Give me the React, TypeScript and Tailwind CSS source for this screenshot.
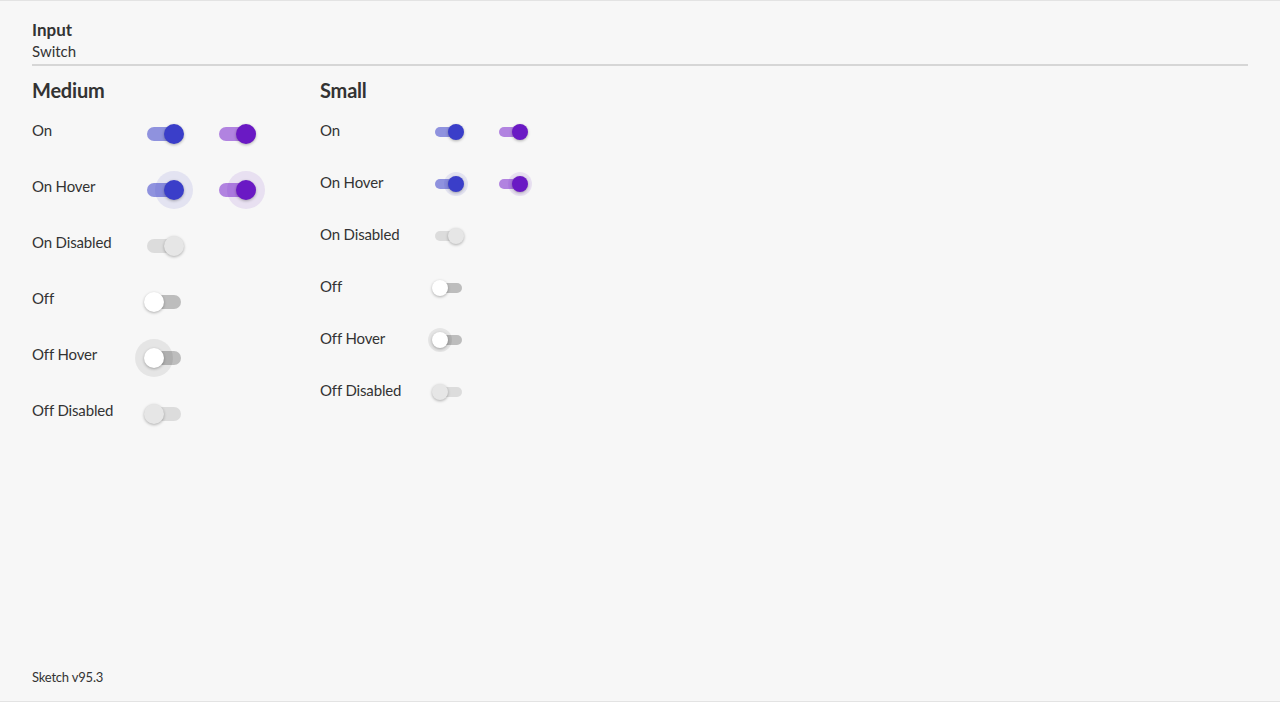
import React from "react";

type Variant = "on" | "onHover" | "onDisabled" | "off" | "offHover" | "offDisabled";

function Switch({ size, color, variant }: { size: "md" | "sm"; color: "blue" | "purple"; variant: Variant }) {
  const md = size === "md";
  const on = variant.startsWith("on");
  const hover = variant.endsWith("Hover");
  const disabled = variant.endsWith("Disabled");

  let track = "bg-[#bdbdbd]";
  let thumb = "bg-white";
  let halo = "bg-[rgba(0,0,0,0.07)]";
  if (on && !disabled) {
    if (color === "blue") {
      track = "bg-[#8f92de]";
      thumb = "bg-[#3a3ec9]";
      halo = "bg-[rgba(58,62,201,0.1)]";
    } else {
      track = "bg-[#b183e0]";
      thumb = "bg-[#6a19c4]";
      halo = "bg-[rgba(106,25,196,0.1)]";
    }
  }
  if (disabled) {
    track = "bg-[#dcdcdc]";
    thumb = "bg-[#e6e6e6]";
  }

  const box = md ? "w-[37px] h-[20px]" : "w-[29px] h-[16px]";
  const trackCls = md ? "left-0 top-[3px] w-[34px] h-[14px]" : "left-0 top-[3px] w-[27px] h-[10px]";
  const thumbPos = md ? (on ? "left-[17px]" : "left-[-3px]") : on ? "left-[13px]" : "left-[-3px]";
  const thumbSize = md ? "w-[20px] h-[20px] top-0" : "w-[16px] h-[16px] top-0";
  const haloPos = md
    ? on
      ? "left-[8px] top-[-9px] w-[38px] h-[38px]"
      : "left-[-12px] top-[-9px] w-[38px] h-[38px]"
    : on
    ? "left-[9px] top-[-4px] w-[24px] h-[24px]"
    : "left-[-7px] top-[-4px] w-[24px] h-[24px]";

  return (
    <div className={`relative ${box}`}>
      <div className={`absolute rounded-full ${trackCls} ${track}`} />
      {hover && <div className={`absolute rounded-full ${haloPos} ${halo}`} />}
      <div
        className={`absolute rounded-full ${thumbSize} ${thumbPos} ${thumb} shadow-[0_1px_3px_rgba(0,0,0,0.3)]`}
      />
    </div>
  );
}

const rows: { label: string; variant: Variant; both: boolean }[] = [
  { label: "On", variant: "on", both: true },
  { label: "On Hover", variant: "onHover", both: true },
  { label: "On Disabled", variant: "onDisabled", both: false },
  { label: "Off", variant: "off", both: false },
  { label: "Off Hover", variant: "offHover", both: false },
  { label: "Off Disabled", variant: "offDisabled", both: false },
];

function Column({ title, size }: { title: string; size: "md" | "sm" }) {
  const md = size === "md";
  return (
    <div className="flex flex-col">
      <div className="text-[20px] font-bold leading-[24px] text-[#333] tracking-[-0.2px]">{title}</div>
      <div className={`flex flex-col ${md ? "mt-[2px]" : "mt-[4px]"}`}>
        {rows.map((r) => (
          <div key={r.label} className={`flex items-center ${md ? "h-[56px]" : "h-[52px]"}`}>
            <div className="w-[115px] text-[15px] text-[#333] tracking-[-0.15px] mt-[-4px]">{r.label}</div>
            <div className={`flex items-center gap-[35px] ${md ? "mt-[4px]" : ""}`}>
              <Switch size={size} color="blue" variant={r.variant} />
              {r.both && <Switch size={size} color="purple" variant={r.variant} />}
            </div>
          </div>
        ))}
      </div>
    </div>
  );
}

export default function App() {
  return (
    <div
      className="h-[702px] w-full bg-[#f7f7f7] border-t border-b border-[#e3e3e3] flex flex-col px-8"
      style={{ fontFamily: "Lato, 'Noto Sans', sans-serif" }}
    >
      <div className="pt-[19px]">
        <div className="text-[17px] font-bold leading-[20px] text-[#333]">Input</div>
        <div className="text-[15px] leading-[20px] text-[#333] mt-[1px]">Switch</div>
      </div>
      <div className="mt-[3px] h-[2px] bg-[#d6d6d6]" />
      <div className="flex mt-[12px]">
        <div className="w-[288px]">
          <Column title="Medium" size="md" />
        </div>
        <Column title="Small" size="sm" />
      </div>
      <div className="mt-auto mb-[14px] text-[13px] text-[#333] tracking-[-0.2px]">Sketch v95.3</div>
    </div>
  );
}
